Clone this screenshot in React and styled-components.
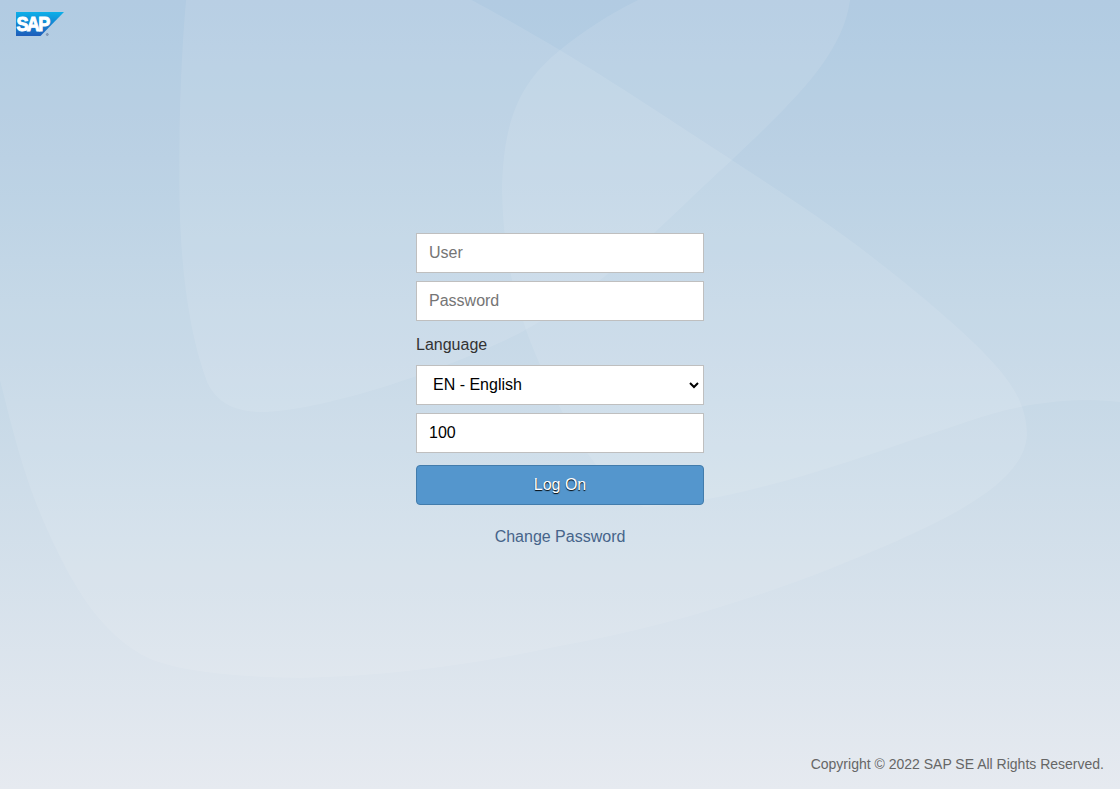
import React from 'react';
import styled, { createGlobalStyle, css } from 'styled-components';

const GlobalStyle = createGlobalStyle`
  * { box-sizing: border-box; }
  body {
    margin: 0;
    font-family: "Liberation Sans", Arial, sans-serif;
    font-size: 16px;
    color: #333;
  }
`;

const Page = styled.div`
  position: relative;
  display: flex;
  flex-direction: column;
  width: 100%;
  height: 100vh;
  min-height: 600px;
  overflow: hidden;
  background: linear-gradient(to bottom, #aac6df 0%, #b4cde2 20%, #c7d9e7 51%, #e6eaf0 100%);
`;

const Backdrop = styled.svg`
  position: absolute;
  inset: 0;
  width: 100%;
  height: 100%;
  fill: #fff;
  fill-opacity: 0.095;
`;

const Header = styled.header`
  position: relative;
  height: 233px;
  flex: none;
  padding: 12px 16px;
`;

const Logo = styled.svg`
  display: block;
  width: 50px;
  height: 25px;
`;

const Form = styled.form`
  position: relative;
  display: flex;
  flex-direction: column;
  width: 288px;
  margin: 0 auto;
`;

const control = css`
  width: 100%;
  height: 40px;
  margin: 0 0 8px;
  border: 1px solid #bfbfbf;
  border-radius: 0;
  background-color: #fff;
  color: #000;
  font: inherit;
  outline: none;
`;

const Field = styled.input`
  ${control}
  padding: 0 12px;
  &::placeholder { color: #757575; }
`;

const Label = styled.label`
  height: 36px;
  line-height: 31px;
`;

const SelectBox = styled.div`
  position: relative;
  height: 48px;
`;

const Select = styled.select`
  ${control}
  appearance: none;
  padding: 0 24px 2px 16px;
`;

const Chevron = styled.svg`
  position: absolute;
  top: 16px;
  right: 5px;
  width: 10px;
  height: 8px;
  pointer-events: none;
`;

const Button = styled.button`
  height: 40px;
  margin: 4px 0 0;
  padding: 0;
  border: 1px solid #427cac;
  border-radius: 4px;
  background: #5496cd;
  color: #fff;
  font: inherit;
  text-shadow: 0 1px 1px #000;
`;

const Link = styled.a`
  align-self: center;
  margin-top: 22px;
  line-height: 20px;
  color: #46648a;
  text-decoration: none;
`;

const Footer = styled.footer`
  position: relative;
  margin-top: auto;
  padding: 0 16px 16px;
  text-align: right;
  font-size: 14px;
  line-height: 18px;
  color: #666;
`;

function SapLogo() {
  return (
    <Logo viewBox="0 0 50 25" role="img" aria-label="SAP">
      <defs>
        <linearGradient id="logoFill" x1="0" y1="0" x2="0" y2="1">
          <stop offset="0" stopColor="#0cb0e9" />
          <stop offset="0.45" stopColor="#1388d3" />
          <stop offset="1" stopColor="#1f5dba" />
        </linearGradient>
      </defs>
      <path d="M0 0H48L24.500 24H0Z" fill="url(#logoFill)" />
      <text
        transform="translate(0.400 18.800) scale(0.900 1)"
        fontFamily="Liberation Sans, Arial, sans-serif"
        fontWeight="700"
        fontSize="20"
        letterSpacing="-1.700"
        fill="#fff"
        stroke="#fff"
        strokeWidth="1"
      >
        SAP
      </text>
      <circle cx="31.300" cy="22.500" r="1" fill="#8fa3bd" stroke="#7187a8" strokeWidth="0.8" />
    </Logo>
  );
}

export default function App() {
  return (
    <>
      <GlobalStyle />
      <Page>
        <Backdrop viewBox="0 0 1120 789" preserveAspectRatio="none" aria-hidden="true">
          <path d="M187 -10C180 60 178 150 180 220C183 285 190 335 207 382C217 403 235 412 262 412C320 411 440 373 520 333C610 285 665 220 732 160C800 95 848 50 851 -10Z" />
          <path d="M-10 -10H454C470 0 500 14 560 50C620 86 670 120 732 160C782 193 830 224 867 253C910 286 945 315 974 343C1006 374 1027 400 1027 435C1024 486 942 524 830 569C745 602 655 629 560 646C460 668 370 677 300 678C230 677 180 671 150 659C100 635 70 583 42 518C20 465 10 420 -10 340Z" />
          <path d="M660 -10C620 7 590 26 560 50C520 82 503 120 502 190C503 265 520 320 540 365C557 405 575 438 596 465C610 485 630 503 644 507C690 505 740 493 785 481C840 466 890 447 946 429C980 417 1000 411 1025 406C1065 399 1095 399 1130 403V-10Z" />
        </Backdrop>
        <Header>
          <SapLogo />
        </Header>
        <Form onSubmit={(event) => event.preventDefault()}>
          <Field type="text" placeholder="User" aria-label="User" />
          <Field type="password" placeholder="Password" aria-label="Password" />
          <Label htmlFor="language">Language</Label>
          <SelectBox>
            <Select id="language" defaultValue="EN">
              <option value="EN">EN - English</option>
            </Select>
            <Chevron viewBox="0 0 10 8" aria-hidden="true">
              <path d="M1 2L5 6L9 2" fill="none" stroke="#000" strokeWidth="2" />
            </Chevron>
          </SelectBox>
          <Field type="text" defaultValue="100" aria-label="Client" />
          <Button type="submit">Log On</Button>
          <Link href="#">Change Password</Link>
        </Form>
        <Footer>Copyright © 2022 SAP SE All Rights Reserved.</Footer>
      </Page>
    </>
  );
}
